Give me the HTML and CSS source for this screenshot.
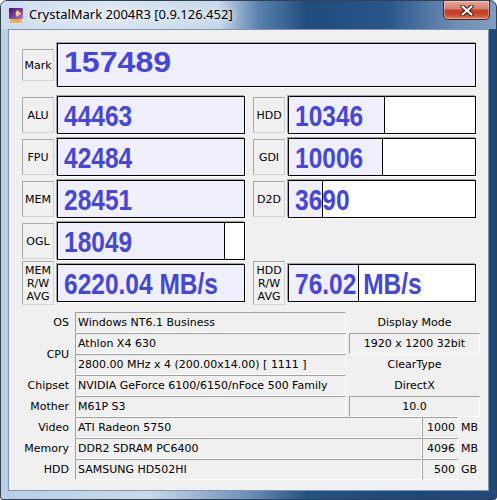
FILE: index.html
```html
<!DOCTYPE html>
<html lang="en">

<head>
    <meta charset="UTF-8">
    <title>CrystalMark 2004R3</title>
    <link rel="stylesheet" href="styles.css">
</head>

<body>
    <div class="window">
        <div class="titlebar">
            <svg class="app-icon" viewBox="0 0 16 16">
                <defs>
                    <linearGradient id="icon-bg" x1="0" y1="0" x2="1" y2="1">
                        <stop offset="0" stop-color="#3b0f6b" />
                        <stop offset="1" stop-color="#b46de8" />
                    </linearGradient>
                </defs>
                <rect x="1" y="1" width="14" height="11" rx="1" fill="url(#icon-bg)" />
                <path d="M9 3 L13 6.5 L9 10 L7.5 6.5 Z" fill="#ffd84a" />
                <path d="M4 12 H12 L15 15.5 H1 Z" fill="#f0a826" />
            </svg>
            <span class="caption">CrystalMark 2004R3 [0.9.126.452]</span>
            <div class="close-btn">
                <svg width="14" height="11" viewBox="0 0 14 11">
                    <path d="M2.5 1.5 L11.5 9.5 M11.5 1.5 L2.5 9.5" stroke="#3a1a14" stroke-width="4.2" stroke-linecap="round" />
                    <path d="M2.5 1.5 L11.5 9.5 M11.5 1.5 L2.5 9.5" stroke="#fff" stroke-width="2.2" stroke-linecap="round" />
                </svg>
            </div>
        </div>

        <div class="client">
            <div class="mark-row">
                <div class="tag tag-mark">Mark</div>
                <div class="meter meter-mark" style="--fill:100%"><span class="num">157489</span></div>
            </div>

            <div class="scores">
                <div class="cell">
                    <div class="tag">ALU</div>
                    <div class="meter" style="--fill:100%"><span class="num">44463</span></div>
                </div>
                <div class="cell">
                    <div class="tag">HDD</div>
                    <div class="meter" style="--fill:51%"><span class="num">10346</span></div>
                </div>
                <div class="cell">
                    <div class="tag">FPU</div>
                    <div class="meter" style="--fill:100%"><span class="num">42484</span></div>
                </div>
                <div class="cell">
                    <div class="tag">GDI</div>
                    <div class="meter" style="--fill:50%"><span class="num">10006</span></div>
                </div>
                <div class="cell">
                    <div class="tag">MEM</div>
                    <div class="meter" style="--fill:100%"><span class="num">28451</span></div>
                </div>
                <div class="cell">
                    <div class="tag">D2D</div>
                    <div class="meter" style="--fill:18%"><span class="num">3690</span></div>
                </div>
                <div class="cell">
                    <div class="tag">OGL</div>
                    <div class="meter" style="--fill:89%"><span class="num">18049</span></div>
                </div>
                <div class="cell"></div>
                <div class="cell">
                    <div class="tag tag-tall">MEM<br>R/W<br>AVG</div>
                    <div class="meter" style="--fill:100%"><span class="num">6220.04 MB/s</span></div>
                </div>
                <div class="cell">
                    <div class="tag tag-tall">HDD<br>R/W<br>AVG</div>
                    <div class="meter" style="--fill:37%"><span class="num">76.02 MB/s</span></div>
                </div>
            </div>

            <div class="info">
                <div class="key">OS</div>
                <div class="field">Windows NT6.1 Business</div>
                <div class="side">Display Mode</div>

                <div class="key key-cpu">CPU</div>
                <div class="field">Athlon X4 630</div>
                <div class="side field">1920 x 1200 32bit</div>
                <div class="field">2800.00 MHz x 4 (200.00x14.00) [ 1111 ]</div>
                <div class="side">ClearType</div>

                <div class="key">Chipset</div>
                <div class="field">NVIDIA GeForce 6100/6150/nFoce 500 Family</div>
                <div class="side">DirectX</div>

                <div class="key">Mother</div>
                <div class="field">M61P S3</div>
                <div class="side field">10.0</div>

                <div class="key">Video</div>
                <div class="wide">
                    <div class="field">ATI Radeon 5750</div>
                    <div class="field size">1000</div>
                    <span class="unit">MB</span>
                </div>

                <div class="key">Memory</div>
                <div class="wide">
                    <div class="field">DDR2 SDRAM PC6400</div>
                    <div class="field size">4096</div>
                    <span class="unit">MB</span>
                </div>

                <div class="key">HDD</div>
                <div class="wide">
                    <div class="field">SAMSUNG HD502HI</div>
                    <div class="field size">500</div>
                    <span class="unit">GB</span>
                </div>
            </div>
        </div>
    </div>
</body>

</html>
```

FILE: styles.css
```css
body {
    margin: 0;
    background-color: #fff;
}

.window {
    width: 497px;
    height: 500px;
    box-sizing: border-box;
    border: 1px solid #33404f;
    border-radius: 7px 7px 3px 3px;
    background: linear-gradient(90deg, #b9cfe6 0%, #c8d9ec 30%, #6a8fb8 50%, #24527f 62%, #1d4877 85%, #214a7a 100%);
    display: flex;
    flex-direction: column;
}

/* caption bar */

.titlebar {
    height: 28px;
    display: flex;
    align-items: flex-start;
    padding: 0 6px 0 7px;
    border-radius: 6px 6px 0 0;
    background: linear-gradient(90deg, #cddcee 0%, #dbe6f2 22%, #c5d7ea 44%, #5a82ad 52%, #1f4c7c 62%, #28568a 78%, #6e8fb6 92%, #7f9dc0 100%);
}

.app-icon {
    width: 16px;
    height: 16px;
    margin-top: 6px;
    flex: none;
}

.caption {
    margin-left: 5px;
    font-family: "Noto Sans", sans-serif;
    font-size: 13px;
    line-height: 26px;
    color: #000;
    text-shadow: 0 0 6px #fff, 0 0 10px #fff;
    white-space: nowrap;
}

.close-btn {
    margin-left: auto;
    width: 47px;
    height: 19px;
    box-sizing: border-box;
    border: 1px solid #5a2118;
    border-top: none;
    border-radius: 0 0 5px 5px;
    background: linear-gradient(180deg, #e6a595 0%, #d6826f 42%, #c0402a 52%, #c5442b 72%, #e17b57 100%);
    box-shadow: inset 0 0 0 1px rgba(255, 255, 255, 0.35);
    display: flex;
    align-items: center;
    justify-content: center;
}

/* client area */

.client {
    margin: 0 7px;
    height: 462px;
    box-sizing: border-box;
    border: 1px solid #8196ae;
    background-color: #f0f0f0;
    padding: 13px 0 0 13px;
    font-family: "DejaVu Sans", sans-serif;
    font-size: 11px;
    color: #000;
}

.tag {
    flex: none;
    width: 32px;
    height: 36px;
    box-sizing: border-box;
    border: 1px solid;
    border-color: #a9a9a9 #d2d2d2 #d2d2d2 #a9a9a9;
    display: flex;
    align-items: center;
    justify-content: center;
    text-align: center;
    line-height: 13px;
}

.tag-mark {
    height: 32px;
}

.tag-tall {
    height: 44px;
    margin: -3px 0;
}

.meter {
    flex: none;
    width: 188px;
    height: 38px;
    box-sizing: border-box;
    border: 1px solid #000;
    box-shadow: -1px -1px 0 #a0a0a0, 1px 1px 0 #fff;
    background: linear-gradient(90deg, #efeffd var(--fill), #000 var(--fill), #000 calc(var(--fill) + 1px), #fff calc(var(--fill) + 1px));
    display: flex;
    align-items: center;
    padding: 2px 0 0 6px;
    overflow: hidden;
}

.num {
    display: inline-block;
    font-family: "Liberation Sans", Arial, sans-serif;
    font-weight: bold;
    font-size: 29px;
    line-height: 1;
    color: #4646de;
    white-space: nowrap;
    transform: scaleX(0.845);
    transform-origin: 0 50%;
}

.mark-row {
    display: flex;
    align-items: center;
    gap: 3px;
}

.meter-mark {
    width: 419px;
    height: 44px;
    padding: 0 0 6px 6px;
}

.meter-mark .num {
    font-size: 30px;
    transform: scaleX(1.07);
}

.scores {
    margin-top: 9px;
    display: grid;
    grid-template-columns: 223px 223px;
    column-gap: 8px;
    row-gap: 4px;
}

.cell {
    display: flex;
    align-items: center;
    gap: 3px;
    height: 38px;
}

/* system info table */

.info {
    margin-top: 10px;
    display: grid;
    grid-template-columns: 53px 271px 134px;
    grid-auto-rows: 21px;
}

.key {
    padding-right: 6px;
    text-align: right;
    line-height: 21px;
    white-space: nowrap;
}

.key-cpu {
    grid-row: span 2;
    display: flex;
    align-items: center;
    justify-content: flex-end;
}

.side {
    margin-left: 3px;
    text-align: center;
    line-height: 21px;
}

.field {
    box-sizing: border-box;
    border: 1px solid;
    border-color: #a0a0a0 #fff #fff #a0a0a0;
    padding: 0 2px;
    line-height: 19px;
    white-space: nowrap;
    overflow: hidden;
}

.wide {
    grid-column: span 2;
    display: flex;
}

.wide .field {
    flex: 1;
}

.wide .size {
    flex: none;
    width: 36px;
    text-align: right;
}

.unit {
    width: 22px;
    padding-left: 3px;
    box-sizing: border-box;
    line-height: 21px;
}
```
